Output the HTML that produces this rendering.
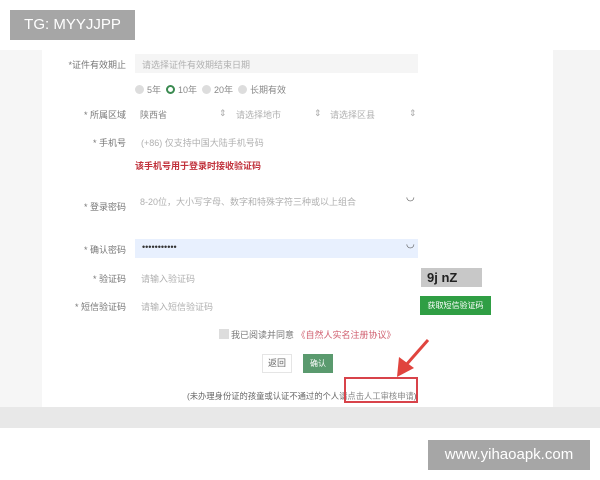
<!DOCTYPE html>
<html><head><meta charset="utf-8"><style>
*{margin:0;padding:0;box-sizing:border-box}
body{width:600px;height:480px;position:relative;background:#fff;font-family:"Liberation Sans","Noto Sans CJK SC",sans-serif;font-size:9px;color:#555;overflow:hidden}
.a{position:absolute;white-space:nowrap}
.lbl{position:absolute;text-align:right;width:90px;left:36px;color:#777;font-size:9px}
.ph{color:#b0b0b0}
.inp{position:absolute;left:135px;width:283px;height:19px;background:#fafafa}
.rd{display:inline-block;width:9px;height:9px;border-radius:50%;background:#ddd;vertical-align:-1px;margin-right:3px}
</style></head><body>
<div class="a" style="left:0;top:50px;width:42px;height:357px;background:#f6f6f6"></div>
<div class="a" style="left:553px;top:50px;width:47px;height:357px;background:#f4f4f4"></div>
<div class="a" style="left:0;top:407px;width:600px;height:21px;background:#e8e8e8"></div>

<div class="a" style="left:10px;top:10px;width:125px;height:30px;background:#a6a6a6;color:#fff;font-size:15px;line-height:30px;text-align:center">TG: MYYJJPP</div>

<div class="lbl" style="top:58px">*证件有效期止</div>
<div class="inp" style="top:54px;background:#f5f5f5"></div>
<div class="a ph" style="left:142px;top:58px">请选择证件有效期结束日期</div>

<div class="a" style="left:135px;top:83px;color:#888"><span class="rd"></span>5年 &nbsp;<span class="rd" style="background:#fff;border:2.5px solid #3a8a50"></span>10年 &nbsp;<span class="rd"></span>20年 &nbsp;<span class="rd"></span>长期有效</div>

<div class="lbl" style="top:108px">* 所属区域</div>
<div class="a" style="left:140px;top:108px;color:#888">陕西省</div>
<div class="a" style="left:219px;top:108px;color:#aaa">⇕</div>
<div class="a ph" style="left:236px;top:108px">请选择地市</div>
<div class="a" style="left:314px;top:108px;color:#aaa">⇕</div>
<div class="a ph" style="left:330px;top:108px">请选择区县</div>
<div class="a" style="left:409px;top:108px;color:#aaa">⇕</div>

<div class="lbl" style="top:136px">* 手机号</div>
<div class="a ph" style="left:141px;top:136px">(+86) 仅支持中国大陆手机号码</div>
<div class="a" style="left:135px;top:159px;color:#c0303a;font-weight:bold">该手机号用于登录时接收验证码</div>

<div class="lbl" style="top:200px">* 登录密码</div>
<div class="a ph" style="left:140px;top:195px">8-20位，大小写字母、数字和特殊字符三种或以上组合</div>
<div class="a" style="left:406px;top:192px;color:#555;font-size:10px">◡</div>

<div class="lbl" style="top:243px">* 确认密码</div>
<div class="inp" style="top:239px;background:#e8f0fe"></div>
<div class="a" style="left:142px;top:242px;color:#333">•••••••••••</div>
<div class="a" style="left:406px;top:239px;color:#555;font-size:10px">◡</div>

<div class="lbl" style="top:272px">* 验证码</div>
<div class="a ph" style="left:141px;top:272px">请输入验证码</div>
<div class="a" style="left:421px;top:268px;width:61px;height:19px;background:#c8c8c8;color:#222;font-weight:bold;font-size:13px;line-height:19px;padding-left:6px">9j nZ</div>

<div class="lbl" style="top:300px">* 短信验证码</div>
<div class="a ph" style="left:141px;top:300px">请输入短信验证码</div>
<div class="a" style="left:420px;top:296px;width:71px;height:19px;background:#2f9e44;color:#fff;font-size:8px;line-height:19px;text-align:center">获取短信验证码</div>

<div class="a" style="left:219px;top:329px;width:10px;height:10px;background:#ddd"></div>
<div class="a" style="left:231px;top:328px;color:#777">我已阅读并同意 <span style="color:#d06070">《自然人实名注册协议》</span></div>

<div class="a" style="left:262px;top:354px;width:30px;height:19px;border:1px solid #e5e5e5;line-height:17px;text-align:center;color:#666">返回</div>
<div class="a" style="left:303px;top:354px;width:30px;height:19px;background:#5a9a6e;color:#fff;line-height:19px;text-align:center;font-size:8px">确认</div>

<div class="a" style="left:187px;top:390px;color:#666;font-size:8.3px">(未办理身份证的孩童或认证不通过的个人请<span style="color:#888">点击人工审核申请</span>)</div>
<div class="a" style="left:344px;top:377px;width:74px;height:26px;border:2px solid #d8434a"></div>
<svg class="a" style="left:0;top:0" width="600" height="480"><line x1="428" y1="340" x2="406" y2="365" stroke="#e0443e" stroke-width="3"/><polygon points="397,377 399,357 414,368" fill="#e0443e"/></svg>

<div class="a" style="left:428px;top:440px;width:162px;height:30px;background:#a6a6a6;color:#fff;font-size:15px;line-height:30px;text-align:center">www.yihaoapk.com</div>
</body></html>
